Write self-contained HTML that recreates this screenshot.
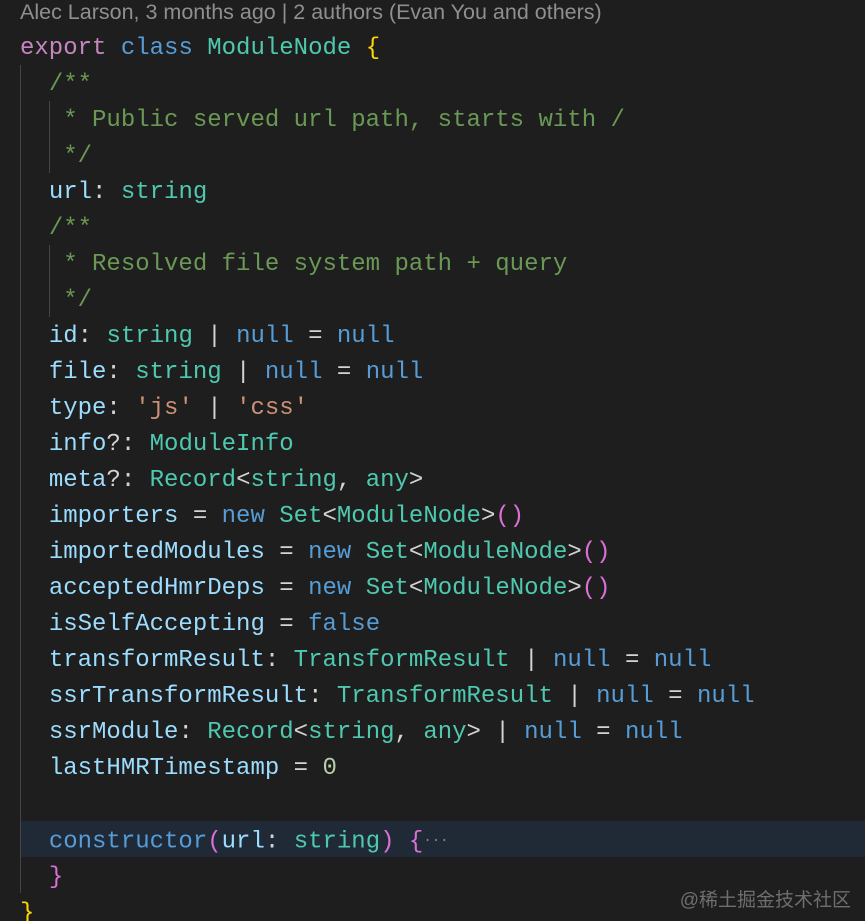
<!DOCTYPE html>
<html><head><meta charset="utf-8"><style>
html,body{margin:0;padding:0;background:#1e1e1e;width:865px;height:921px;overflow:hidden;position:relative}
.blame{position:absolute;left:20px;top:0;height:25px;line-height:25px;font:21.5px "Liberation Sans",sans-serif;color:#8f8f8f;white-space:pre}
pre{position:absolute;left:20px;top:31px;margin:0;font:24px/36px "Liberation Mono",monospace;color:#d4d4d4;white-space:pre}
.k{color:#c586c0}.b{color:#569cd6}.t{color:#4ec9b0}.y{color:#ffd700}.p{color:#9cdcfe}.c{color:#6a9955}.s{color:#ce9178}.n{color:#b5cea8}.m{color:#da70d6}
.hl{position:absolute;left:20px;right:0;top:821px;height:36px;background:#1f2a36}
.g{position:absolute;width:1px;background:#454545}
.wm{position:absolute;right:14px;top:885px;font:19px "Liberation Sans","Noto Sans CJK SC",sans-serif;color:#6e6e6e}
.dots{color:#8a8a8a;font-size:14px;vertical-align:middle}
</style></head><body>
<div class="hl"></div>
<div class="g" style="left:20px;top:65px;height:828px"></div>
<div class="g" style="left:49px;top:101px;height:72px"></div>
<div class="g" style="left:49px;top:245px;height:72px"></div>
<div class="blame">Alec Larson, 3 months ago | 2 authors (Evan You and others)</div>
<pre><span class="k">export</span> <span class="b">class</span> <span class="t">ModuleNode</span> <span class="y">{</span>
  <span class="c">/**</span>
<span class="c">   * Public served url path, starts with /</span>
<span class="c">   */</span>
  <span class="p">url</span>: <span class="t">string</span>
  <span class="c">/**</span>
<span class="c">   * Resolved file system path + query</span>
<span class="c">   */</span>
  <span class="p">id</span>: <span class="t">string</span> | <span class="b">null</span> = <span class="b">null</span>
  <span class="p">file</span>: <span class="t">string</span> | <span class="b">null</span> = <span class="b">null</span>
  <span class="p">type</span>: <span class="s">'js'</span> | <span class="s">'css'</span>
  <span class="p">info</span>?: <span class="t">ModuleInfo</span>
  <span class="p">meta</span>?: <span class="t">Record</span>&lt;<span class="t">string</span>, <span class="t">any</span>&gt;
  <span class="p">importers</span> = <span class="b">new</span> <span class="t">Set</span>&lt;<span class="t">ModuleNode</span>&gt;<span class="m">()</span>
  <span class="p">importedModules</span> = <span class="b">new</span> <span class="t">Set</span>&lt;<span class="t">ModuleNode</span>&gt;<span class="m">()</span>
  <span class="p">acceptedHmrDeps</span> = <span class="b">new</span> <span class="t">Set</span>&lt;<span class="t">ModuleNode</span>&gt;<span class="m">()</span>
  <span class="p">isSelfAccepting</span> = <span class="b">false</span>
  <span class="p">transformResult</span>: <span class="t">TransformResult</span> | <span class="b">null</span> = <span class="b">null</span>
  <span class="p">ssrTransformResult</span>: <span class="t">TransformResult</span> | <span class="b">null</span> = <span class="b">null</span>
  <span class="p">ssrModule</span>: <span class="t">Record</span>&lt;<span class="t">string</span>, <span class="t">any</span>&gt; | <span class="b">null</span> = <span class="b">null</span>
  <span class="p">lastHMRTimestamp</span> = <span class="n">0</span>

  <span class="b">constructor</span><span class="m">(</span><span class="p">url</span>: <span class="t">string</span><span class="m">)</span> <span class="m">{</span><span class="dots">···</span>
  <span class="m">}</span>
<span class="y">}</span></pre>
<div class="wm">@稀土掘金技术社区</div>
</body></html>
